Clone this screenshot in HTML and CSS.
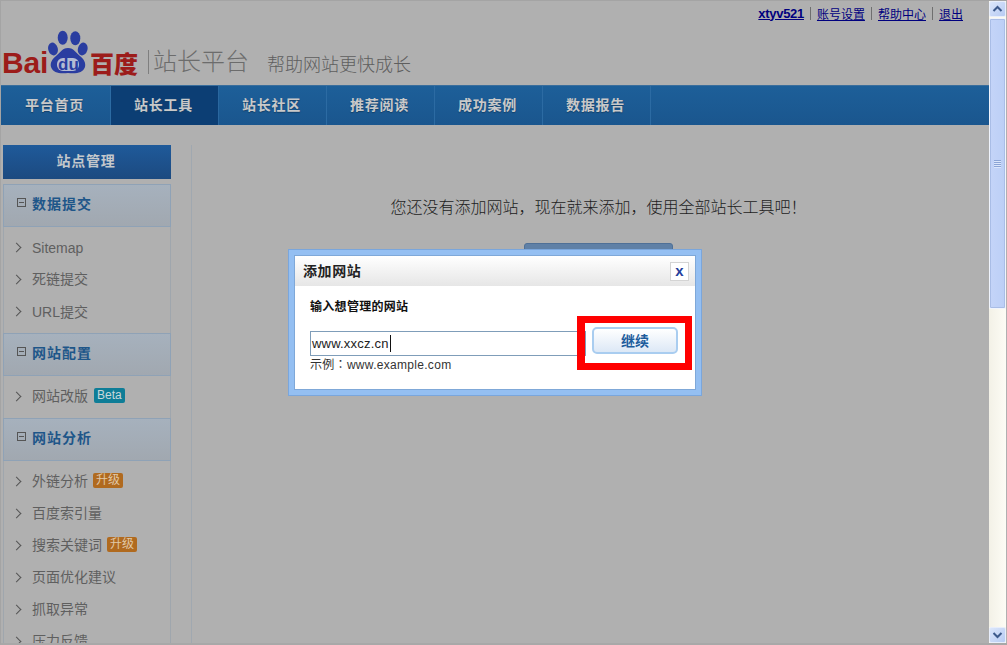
FILE: index.html
```html
<!DOCTYPE html>
<html lang="zh-CN">
<head>
<meta charset="utf-8">
<title>百度站长平台</title>
<link rel="stylesheet" href="styles.css">
</head>
<body>
<div class="window">
  <div class="page">
    <header class="header">
      <div class="toplinks">
        <a class="user" href="#">xtyv521</a><i></i><a href="#">账号设置</a><i></i><a href="#">帮助中心</a><i></i><a href="#">退出</a>
      </div>
      <div class="brand">
        <div class="logo">
          <span class="bai">Bai</span>
          <span class="paw">
            <svg width="40" height="44" viewBox="0 0 40 44">
              <ellipse cx="14.700" cy="7.700" rx="5" ry="7" fill="#2a3da0"/>
              <ellipse cx="27.300" cy="8.300" rx="5" ry="7" fill="#2a3da0"/>
              <ellipse cx="5" cy="19" rx="4.800" ry="6.500" transform="rotate(-15 5 19)" fill="#2a3da0"/>
              <ellipse cx="34.700" cy="19" rx="4.800" ry="6.500" transform="rotate(15 34.700 19)" fill="#2a3da0"/>
              <path d="M20 18C14 18 12 23 8 26C4 29 2 33 3 37C5 43 12 44 20 43C28 44 35 43 37 37C38 33 36 29 32 26C28 23 26 18 20 18Z" fill="#2a3da0"/>
              <rect x="9" y="28" width="22" height="13" rx="6" fill="#b4bcd4"/>
            </svg>
            <span class="du">du</span>
          </span>
          <span class="baidu-cn">百度</span>
        </div>
        <span class="brand-sep"></span>
        <span class="platform">站长平台</span>
        <span class="slogan">帮助网站更快成长</span>
      </div>
    </header>
    <nav class="nav">
      <a href="#">平台首页</a>
      <a href="#" class="active">站长工具</a>
      <a href="#">站长社区</a>
      <a href="#">推荐阅读</a>
      <a href="#">成功案例</a>
      <a href="#">数据报告</a>
    </nav>
    <div class="content">
      <aside class="sidebar">
        <div class="side-title">站点管理</div>
        <div class="side-box">
          <div class="group"><span class="minus"></span>数据提交</div>
          <ul class="items">
            <li class="latin">Sitemap</li>
            <li>死链提交</li>
            <li class="mixed">URL提交</li>
          </ul>
          <div class="group"><span class="minus"></span>网站配置</div>
          <ul class="items">
            <li>网站改版<span class="tag beta">Beta</span></li>
          </ul>
          <div class="group"><span class="minus"></span>网站分析</div>
          <ul class="items">
            <li>外链分析<span class="tag up">升级</span></li>
            <li>百度索引量</li>
            <li>搜索关键词<span class="tag up">升级</span></li>
            <li>页面优化建议</li>
            <li>抓取异常</li>
            <li>压力反馈</li>
          </ul>
        </div>
      </aside>
      <main class="main">
        <p class="notice">您还没有添加网站，现在就来添加，使用全部站长工具吧！</p>
        <div class="add-btn"></div>
      </main>
    </div>
  </div>
  <div class="scrollbar">
    <div class="arrow"><svg width="11" height="8" viewBox="0 0 11 8"><path d="M1.500 6L5.500 2L9.500 6" fill="none" stroke="#3d5a8c" stroke-width="2"/></svg></div>
    <div class="thumb"><span class="grip"></span></div>
    <div class="track"></div>
    <div class="arrow"><svg width="11" height="8" viewBox="0 0 11 8"><path d="M1.500 2L5.500 6L9.500 2" fill="none" stroke="#3d5a8c" stroke-width="2"/></svg></div>
  </div>

  <div class="dialog">
    <div class="dialog-inner">
      <div class="dialog-head">
        <span class="dialog-title">添加网站</span>
        <button class="close">x</button>
      </div>
      <div class="dialog-body">
        <div class="field-label">输入想管理的网站</div>
        <div class="field-row">
          <div class="field">www.xxcz.cn<span class="caret"></span></div>
          <button class="go">继续</button>
        </div>
        <div class="hint" lang="zh-TW">示例：www.example.com</div>
      </div>
    </div>
    <div class="highlight"></div>
  </div>
</div>
</body>
</html>
```
FILE: styles.css
```css
* { box-sizing: border-box; }
html, body { margin: 0; height: 100%; overflow: hidden; }
body { font-family: "Liberation Sans", "Noto Sans CJK SC", sans-serif; background: #b0b0b0; }
a { text-decoration: none; color: inherit; }

.window {
  position: relative;
  display: flex;
  width: 1007px;
  height: 645px;
  overflow: hidden;
  background: #b0b0b0;
  border-top: 1px solid #a4a4a4;
  border-left: 1px solid #a4a4a4;
  border-bottom: 2px solid #a8a8a8;
  padding-right: 2px;
}
.page { width: 988px; flex: none; overflow: hidden; }

.header { height: 84px; display: flex; flex-direction: column; }
.toplinks {
  display: flex;
  justify-content: flex-end;
  align-items: center;
  height: 24px;
  padding-right: 26px;
  font-size: 12px;
  color: #00007f;
}
.toplinks a { text-decoration: underline; }
.toplinks .user { font-weight: bold; font-size: 13px; letter-spacing: -0.3px; }
.toplinks i { width: 1px; height: 13px; margin: 0 6px; background: #6f6f6f; }

.brand { display: flex; align-items: flex-start; padding-top: 5px; height: 60px; }
.logo { display: flex; align-items: flex-end; height: 44px; width: 138px; flex: none; margin-left: 1px; }
.bai { width: 46px; flex: none; font-size: 30px; font-weight: bold; color: #9c1c1a; line-height: 22px; letter-spacing: -0.2px; font-family: "Liberation Sans", sans-serif; }
.paw { position: relative; width: 40px; height: 44px; flex: none; }
.paw svg { display: block; }
.du { position: absolute; left: 10px; top: 26px; font-size: 17px; font-weight: bold; line-height: 17px; color: #2a3da0; font-family: "Liberation Sans", sans-serif; letter-spacing: 0; }
.baidu-cn { font-size: 24px; font-weight: 900; color: #9c1c1a; line-height: 22px; white-space: nowrap; margin-left: 2px; font-family: "Noto Sans CJK SC", sans-serif; }
.brand-sep { width: 1px; height: 24px; background: #7f7f7f; margin: 20px 4px 0 8px; flex: none; }
.platform { font-size: 24px; color: #6c6c6c; line-height: 30px; margin-top: 15px; font-family: "Noto Sans CJK SC", sans-serif; font-weight: 300; white-space: nowrap; }
.slogan { font-size: 18px; color: #5e5e5e; margin-left: 18px; line-height: 30px; margin-top: 18px; font-family: "Noto Sans CJK SC", sans-serif; font-weight: 300; white-space: nowrap; }

.nav {
  display: flex;
  height: 40px;
  background: linear-gradient(#1d5f99, #1a568e);
  border-top: 1px solid #3a6e9c;
}
.nav a {
  width: 108px;
  padding-right: 2px;
  border-right: 1px solid #2c6ba3;
  color: #c9c9c9;
  font-size: 14px;
  font-weight: bold;
  text-align: center;
  line-height: 36px;
  font-family: "Noto Sans CJK SC", sans-serif;
  letter-spacing: 0.800px;
  text-shadow: 0 1px 1px #13406a;
}
.nav a:first-child { width: 110px; }
.nav a.active { background: #0c3e74; border-right-color: #2a679f; }

.content { display: flex; align-items: flex-start; padding-top: 20px; }
.sidebar { width: 168px; margin-left: 2px; flex: none; }
.side-title {
  height: 34px;
  background: linear-gradient(#1f5a9a, #1c4a80);
  color: #c4c8cc;
  font-size: 14px;
  font-weight: bold;
  text-align: center;
  line-height: 31px;
  padding-right: 2px;
  letter-spacing: 0.800px;
  font-family: "Noto Sans CJK SC", sans-serif;
}
.side-box { margin-top: 5px; border-right: 1px solid #9fa6ad; border-left: 1px solid #9fa6ad; }
.group {
  height: 43px;
  margin: 0 -1px;
  background: linear-gradient(#a6b1bd, #a1a8b0);
  border: 1px solid #8fa2b6;
  display: flex;
  align-items: center;
  color: #1e5689;
  font-size: 14px;
  font-weight: bold;
  font-family: "Noto Sans CJK SC", sans-serif;
  letter-spacing: 1px;
  padding: 0 0 6px 13px;
}
.minus {
  position: relative;
  width: 9px;
  height: 9px;
  border: 1px solid #555;
  margin-right: 6px;
  flex: none;
}
.minus::after { content: ""; position: absolute; left: 1px; right: 1px; top: 3px; height: 1px; background: #555; }
.items { list-style: none; margin: 0; padding: 5px 0; }
.items li {
  height: 32px;
  font-size: 14px;
  color: #5f5f5f;
  padding: 0 0 4px 28px;
  position: relative;
  white-space: nowrap;
  display: flex;
  align-items: center;
}
.items li.latin { padding-bottom: 0; }
.items li.mixed { padding-bottom: 2px; }
.items li::before {
  content: "";
  position: absolute;
  left: 9px;
  top: 12px;
  width: 6px;
  height: 6px;
  border-top: 1px solid #555;
  border-right: 1px solid #555;
  transform: rotate(45deg);
}
.tag { margin-left: 5px; height: 15px; line-height: 15px; padding: 0 3px; border-radius: 2px; font-size: 12px; color: #c8d8dc; }
.tag.beta { background: #0e7d97; margin-left: 6px; }
.tag.up { background: #b06a1f; color: #e0c8a8; }

.main {
  flex: 1;
  margin-left: 20px;
  height: 520px;
  padding-left: 16px;
  border-left: 1px solid #a0a8b0;
  text-align: center;
}
.notice { margin: 51px 0 0 0; font-size: 16px; line-height: 20px; color: #1d1d1d; font-family: "Noto Sans CJK SC", sans-serif; font-weight: 300; }
.add-btn { width: 149px; height: 30px; margin: 27px auto 0 auto; background: #5f80a6; border: 1px solid #4f7097; border-radius: 3px; }

.scrollbar { width: 17px; flex: none; display: flex; flex-direction: column; background: #fbf9ef; }
.arrow { height: 16px; flex: none; background: linear-gradient(135deg, #dbe6fb, #b7cbf3); border: 1px solid #e8eefb; display: flex; align-items: center; justify-content: center; border-radius: 2px; }
.thumb { height: 291px; margin-top: 1px; background: linear-gradient(90deg, #c4d4f8, #bccff6); border: 1px solid #f0f4fd; outline: 1px solid #a9bde6; outline-offset: -2px; display: flex; align-items: center; justify-content: center; border-radius: 2px; }
.grip { width: 7px; height: 8px; background: repeating-linear-gradient(#8ba4d6 0, #8ba4d6 1px, #dbe6fb 1px, #dbe6fb 2px); }
.track { flex: 1; background: linear-gradient(90deg, #f3f1e7, #fdfcf5); }

.dialog {
  position: absolute;
  left: 287px;
  top: 248px;
  width: 414px;
  height: 147px;
  background: #94bff2;
  border: 1px solid #7aa6dc;
  padding: 5px;
}
.dialog-inner { height: 100%; background: #fff; border: 1px solid #7fa8d8; }
.dialog-head {
  height: 30px;
  background: linear-gradient(#fff, #e6e6e6);
  display: flex;
  align-items: center;
  justify-content: space-between;
  padding: 0 6px 0 8px;
}
.dialog-title { font-size: 14px; font-weight: bold; color: #222; font-family: "Noto Sans CJK SC", sans-serif; letter-spacing: 0.600px; padding-bottom: 2px; }
.close {
  width: 19px;
  height: 19px;
  padding: 0;
  background: #fff;
  border: 1px solid #d4d4d4;
  color: #24409c;
  font-size: 15px;
  font-weight: bold;
  line-height: 14px;
  font-family: "Liberation Sans", sans-serif;
}
.dialog-body { padding: 11px 0 0 15px; }
.field-label { font-size: 12px; font-weight: bold; color: #111; line-height: 18px; font-family: "Noto Sans CJK SC", sans-serif; letter-spacing: 0.300px; }
.field-row { display: flex; align-items: flex-start; margin-top: 16px; height: 25px; }
.field { width: 276px; height: 25px; border: 1px solid #7f9db9; font-size: 13px; padding-left: 1px; color: #222; letter-spacing: 0.200px; display: flex; align-items: center; }
.caret { width: 1px; height: 17px; background: #111; margin-left: 1px; }
.go {
  width: 86px;
  height: 27px;
  margin: -4px 0 0 6px;
  padding: 0 0 2px 0;
  background: linear-gradient(#fff, #dce8f6);
  border: 2px solid #a9cdf0;
  border-radius: 5px;
  color: #1c5c9c;
  font-size: 14px;
  font-weight: bold;
  font-family: "Noto Sans CJK SC", sans-serif;
}
.hint { font-size: 12px; line-height: 16px; color: #333; margin-top: 1px; letter-spacing: 0.300px; font-family: "Liberation Sans", "Noto Sans CJK TC", sans-serif; }
.highlight {
  position: absolute;
  left: 288px;
  top: 66px;
  width: 115px;
  height: 54px;
  border: 7px solid #f00;
  border-left-width: 8px;
  pointer-events: none;
}
```
